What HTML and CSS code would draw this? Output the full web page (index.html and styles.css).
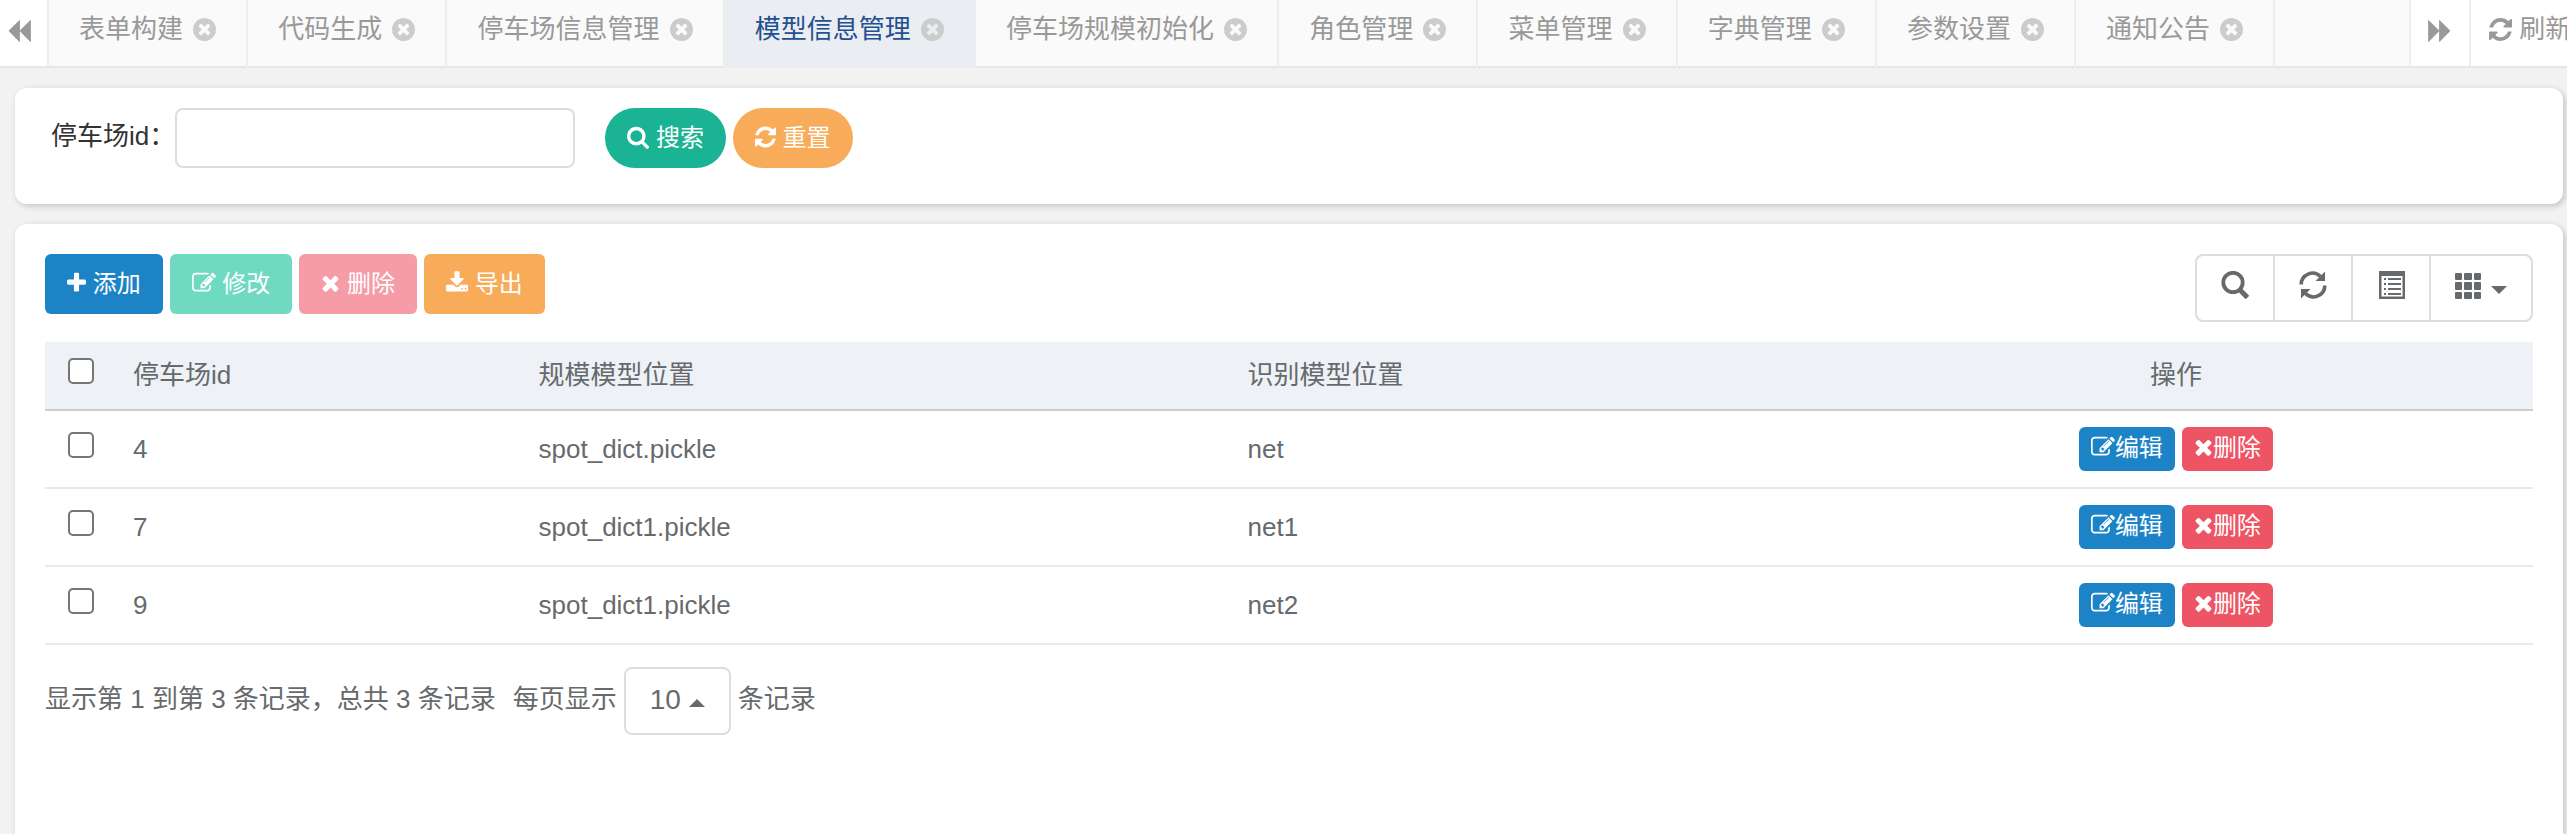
FILE: index.html
```html
<!DOCTYPE html>
<html lang="zh-CN">
<head>
<meta charset="utf-8">
<title>模型信息管理</title>
<link rel="stylesheet" href="styles.css">
</head>
<body>
<svg class="sprite" aria-hidden="true">
  <symbol id="i-close" viewBox="128 128 1536 1536"><path d="M1277 1122q0-26-19-45l-181-181 181-181q19-19 19-45 0-27-19-46l-90-90q-19-19-46-19-26 0-45 19l-181 181-181-181q-19-19-45-19-27 0-46 19l-90 90q-19 19-19 46 0 26 19 45l181 181-181 181q-19 19-19 45 0 27 19 46l90 90q19 19 46 19 26 0 45-19l181-181 181 181q19 19 45 19 27 0 46-19l90-90q19-19 19-46zm387-226q0 209-103 385.5t-279.5 279.5-385.5 103-385.5-103-279.5-279.5-103-385.5 103-385.5 279.5-279.5 385.5-103 385.5 103 279.5 279.5 103 385.5z"/></symbol>
  <symbol id="i-back" viewBox="64 128 1664 1540"><path d="M1683 141q19-19 32-13t13 32v1472q0 26-13 32t-32-13l-710-710q-9-9-13-19v710q0 26-13 32t-32-13l-710-710q-19-19-19-45t19-45l710-710q19-19 32-13t13 32v710q4-10 13-19z"/></symbol>
  <symbol id="i-search" viewBox="64 0 1664 1792"><path d="M1216 832q0-185-131.5-316.5t-316.5-131.5-316.5 131.5-131.5 316.5 131.5 316.5 316.5 131.5 316.5-131.5 131.5-316.5zm512 832q0 52-38 90t-90 38q-54 0-90-38l-343-342q-179 124-399 124-143 0-273.5-55.5t-225-150-150-225-55.5-273.5 55.5-273.5 150-225 225-150 273.5-55.5 273.5 55.5 225 150 150 225 55.5 273.5q0 220-124 399l343 343q37 37 37 90z"/></symbol>
  <symbol id="i-refresh" viewBox="128 128 1536 1536"><path d="M1639 1056q0 5-1 7-64 268-268 434.5t-478 166.5q-146 0-282.5-55t-243.5-157l-129 129q-19 19-45 19t-45-19-19-45v-448q0-26 19-45t45-19h448q26 0 45 19t19 45-19 45l-137 137q71 66 161 102t187 36q134 0 250-65t186-179q11-17 53-117 8-23 30-23h192q13 0 22.5 9.5t9.5 22.5zm25-800v448q0 26-19 45t-45 19h-448q-26 0-45-19t-19-45 19-45l138-138q-148-137-349-137-134 0-250 65t-186 179q-11 17-53 117-8 23-30 23h-199q-13 0-22.5-9.5t-9.5-22.5v-7q65-268 270-434.5t480-166.5q146 0 284 55.5t245 156.5l130-129q19-19 45-19t45 19 19 45z"/></symbol>
  <symbol id="i-plus" viewBox="192 0 1408 1792"><path d="M1600 736v192q0 40-28 68t-68 28h-416v416q0 40-28 68t-68 28h-192q-40 0-68-28t-28-68v-416h-416q-40 0-68-28t-28-68v-192q0-40 28-68t68-28h416v-416q0-40 28-68t68-28h192q40 0 68 28t28 68v416h416q40 0 68 28t28 68z"/></symbol>
  <symbol id="i-times" viewBox="192 0 1408 1792"><path d="M1490 1322q0 40-28 68l-136 136q-28 28-68 28t-68-28l-294-294-294 294q-28 28-68 28t-68-28l-136-136q-28-28-28-68t28-68l294-294-294-294q-28-28-28-68t28-68l136-136q28-28 68-28t68 28l294 294 294-294q28-28 68-28t68 28l136 136q28 28 28 68t-28 68l-294 294 294 294q28 28 28 68z"/></symbol>
  <symbol id="i-edit" viewBox="0 0 1792 1792"><path d="M888 1184l116-116-152-152-116 116v56h96v96h56zm440-720q-16-16-33 1l-350 350q-17 17-1 33t33-1l350-350q17-17 1-33zm80 594v190q0 119-84.5 203.5t-203.5 84.5h-832q-119 0-203.5-84.5t-84.5-203.5v-832q0-119 84.5-203.5t203.5-84.5h832q63 0 117 25 15 7 18 23 3 17-9 29l-49 49q-14 14-32 8-23-6-45-6h-832q-66 0-113 47t-47 113v832q0 66 47 113t113 47h832q66 0 113-47t47-113v-126q0-13 9-22l64-64q15-15 35-7t20 29zm-96-738l288 288-672 672h-288v-288zm444 132l-92 92-288-288 92-92q28-28 68-28t68 28l152 152q28 28 28 68t-28 68z"/></symbol>
  <symbol id="i-download" viewBox="64 0 1664 1792"><path d="M1344 1344q0-26-19-45t-45-19-45 19-19 45 19 45 45 19 45-19 19-45zm256 0q0-26-19-45t-45-19-45 19-19 45 19 45 45 19 45-19 19-45zm128-224v320q0 40-28 68t-68 28h-1472q-40 0-68-28t-28-68v-320q0-40 28-68t68-28h465l135 136q58 56 136 56t136-56l136-136h464q40 0 68 28t28 68zm-325-569q17 41-14 70l-448 448q-18 19-45 19t-45-19l-448-448q-31-29-14-70 17-39 59-39h256v-448q0-26 19-45t45-19h256q26 0 45 19t19 45v448h256q42 0 59 39z"/></symbol>
  <symbol id="i-gsearch" viewBox="0 0 28 28"><circle cx="12" cy="11.500" r="9.700" fill="none" stroke="currentColor" stroke-width="3.800"/><path d="M18.500 18.500l8 8" stroke="currentColor" stroke-width="5"/></symbol>
  <symbol id="i-grefresh" viewBox="0 0 28 28"><path d="M2.200 13.500A11.300 11.300 0 0 1 21.500 5.500M25.800 14.500A11.300 11.300 0 0 1 6.500 22.500" fill="none" stroke="currentColor" stroke-width="3.600"/><path d="M26 .500v9.500h-9.500zM2 27.500v-9.500h9.500z"/></symbol>
  <symbol id="i-list" viewBox="0 0 28 28"><path fill-rule="evenodd" d="M2 0h26v28H2zM4.500 5v20.500h21V5z"/><path d="M7 7h2v2H7zM11 7h13v2H11zM7 12h2v2H7zM11 12h13v2H11zM7 17h2v2H7zM11 17h13v2H11zM7 22h2v2H7zM11 22h13v2H11z"/></symbol>
  <symbol id="i-grid" viewBox="0 0 28 28"><g><rect x="0" y="2" width="7" height="7" rx="1"/><rect x="9" y="2" width="8" height="7" rx="1"/><rect x="19" y="2" width="7" height="7" rx="1"/><rect x="0" y="11" width="7" height="8" rx="1"/><rect x="9" y="11" width="8" height="8" rx="1"/><rect x="19" y="11" width="7" height="8" rx="1"/><rect x="0" y="21" width="7" height="7" rx="1"/><rect x="9" y="21" width="8" height="7" rx="1"/><rect x="19" y="21" width="7" height="7" rx="1"/></g></symbol>
</svg>

<nav class="tabbar">
  <button class="roll" type="button" aria-label="向左"><svg class="ic-roll"><use href="#i-back"/></svg></button>
  <div class="tabs">
    <a class="tab" href="#">表单构建 <svg class="ic-close"><use href="#i-close"/></svg></a>
    <a class="tab" href="#">代码生成 <svg class="ic-close"><use href="#i-close"/></svg></a>
    <a class="tab" href="#">停车场信息管理 <svg class="ic-close"><use href="#i-close"/></svg></a>
    <a class="tab active" href="#">模型信息管理 <svg class="ic-close"><use href="#i-close"/></svg></a>
    <a class="tab" href="#">停车场规模初始化 <svg class="ic-close"><use href="#i-close"/></svg></a>
    <a class="tab" href="#">角色管理 <svg class="ic-close"><use href="#i-close"/></svg></a>
    <a class="tab" href="#">菜单管理 <svg class="ic-close"><use href="#i-close"/></svg></a>
    <a class="tab" href="#">字典管理 <svg class="ic-close"><use href="#i-close"/></svg></a>
    <a class="tab" href="#">参数设置 <svg class="ic-close"><use href="#i-close"/></svg></a>
    <a class="tab" href="#">通知公告 <svg class="ic-close"><use href="#i-close"/></svg></a>
  </div>
  <button class="roll forward" type="button" aria-label="向右"><svg class="ic-roll"><use href="#i-back"/></svg></button>
  <a class="reload" href="#"><svg class="ic-close"><use href="#i-refresh"/></svg> 刷新</a>
</nav>

<main class="content">
  <form class="panel search">
    <label for="park">停车场id：</label>
    <input class="field" id="park" type="text">
    <div class="actions">
      <button class="btn round teal" type="button"><svg class="ic w22"><use href="#i-search"/></svg> 搜索</button>
      <button class="btn round orange" type="button"><svg class="ic w21"><use href="#i-refresh"/></svg> 重置</button>
    </div>
  </form>

  <section class="panel list">
    <div class="toolbar">
      <div class="group">
        <button class="btn blue" type="button"><svg class="ic w19"><use href="#i-plus"/></svg> 添加</button>
        <button class="btn green" type="button" disabled><svg class="ic w24"><use href="#i-edit"/></svg> 修改</button>
        <button class="btn pink" type="button" disabled><svg class="ic w19"><use href="#i-times"/></svg> 删除</button>
        <button class="btn orange" type="button"><svg class="ic w22"><use href="#i-download"/></svg> 导出</button>
      </div>
      <div class="tools">
        <button type="button" aria-label="搜索"><svg class="ic28"><use href="#i-gsearch"/></svg></button>
        <button type="button" aria-label="刷新"><svg class="ic28"><use href="#i-grefresh"/></svg></button>
        <button type="button" aria-label="切换"><svg class="ic28"><use href="#i-list"/></svg></button>
        <button type="button" aria-label="列"><svg class="ic28"><use href="#i-grid"/></svg><span class="caret"></span></button>
      </div>
    </div>

    <table class="grid">
      <colgroup><col class="c-check"><col class="c-id"><col class="c-size"><col class="c-model"><col></colgroup>
      <thead>
        <tr><th><input type="checkbox" aria-label="全选"></th><th>停车场id</th><th>规模模型位置</th><th>识别模型位置</th><th class="ops">操作</th></tr>
      </thead>
      <tbody>
        <tr><td><input type="checkbox" aria-label="选择 4"></td><td>4</td><td>spot_dict.pickle</td><td>net</td><td><div class="row-ops"><a class="btn small blue" href="#"><svg class="ic w24"><use href="#i-edit"/></svg>编辑</a><a class="btn small red" href="#"><svg class="ic w19"><use href="#i-times"/></svg>删除</a></div></td></tr>
        <tr><td><input type="checkbox" aria-label="选择 7"></td><td>7</td><td>spot_dict1.pickle</td><td>net1</td><td><div class="row-ops"><a class="btn small blue" href="#"><svg class="ic w24"><use href="#i-edit"/></svg>编辑</a><a class="btn small red" href="#"><svg class="ic w19"><use href="#i-times"/></svg>删除</a></div></td></tr>
        <tr><td><input type="checkbox" aria-label="选择 9"></td><td>9</td><td>spot_dict1.pickle</td><td>net2</td><td><div class="row-ops"><a class="btn small blue" href="#"><svg class="ic w24"><use href="#i-edit"/></svg>编辑</a><a class="btn small red" href="#"><svg class="ic w19"><use href="#i-times"/></svg>删除</a></div></td></tr>
      </tbody>
    </table>

    <div class="pager">
      <span class="total">显示第 1 到第 3 条记录，总共 3 条记录</span>
      <label for="size">每页显示</label>
      <span class="size"><select id="size"><option>10</option><option>25</option><option>50</option></select><span class="caret up"></span></span>
      <span class="unit">条记录</span>
    </div>
  </section>
</main>
</body>
</html>
```
FILE: styles.css
```css
* { box-sizing: border-box; }

body {
  margin: 0;
  height: 100vh;
  overflow: hidden;
  display: flex;
  flex-direction: column;
  background: #f2f2f2;
  color: #676a6c;
  font: 26px/36px "Liberation Sans", "Noto Sans CJK SC", sans-serif;
}

button, input, select { font: inherit; color: inherit; margin: 0; }
a { color: inherit; text-decoration: none; }
svg { fill: currentColor; flex: none; }
.sprite { position: absolute; width: 0; height: 0; }

/* Tab bar */
.tabbar {
  display: flex;
  flex: none;
  height: 68px;
  background: #fafafa;
  color: #999;
  line-height: 58px;
  white-space: nowrap;
  box-shadow: inset 0 -2px #e6e6e6;
}
.roll {
  width: 49px;
  height: 66px;
  padding: 0 0 4px;
  display: flex;
  align-items: center;
  justify-content: center;
  background: #fff;
  border: 0 solid #eee;
  border-right-width: 2px;
}
.roll:first-child { padding-right: 10px; }
.roll.forward { width: 62px; border-left-width: 2px; }
.roll.forward svg { transform: scaleX(-1); }
.ic-roll { width: 24px; height: 22px; }
.tabs { display: flex; flex: 1; min-width: 0; overflow: hidden; }
.tab { flex: none; padding: 0 30px; border-right: 2px solid #eee; }
.tab.active { background: #eaedf1; color: #23508e; border-color: #eaedf1; }
.ic-close { width: 23px; height: 23px; margin-left: 3px; vertical-align: -3px; }
.tab .ic-close { color: #ccc; }
.reload { width: 96px; height: 66px; padding-left: 15px; background: #fff; overflow: hidden; }

/* Panels */
.content {
  flex: 1;
  min-height: 0;
  display: flex;
  flex-direction: column;
  gap: 20px;
  padding: 20px 4px 0 15px;
}
.panel {
  background: #fff;
  border-radius: 12px;
  box-shadow: 2px 2px 6px rgba(0, 0, 0, .2);
}
.search {
  display: flex;
  align-items: flex-start;
  padding: 20px 36px 36px;
  color: #333;
}
.search label { line-height: 56px; }
.field {
  width: 400px;
  height: 60px;
  padding: 0 16px;
  border: 2px solid #ddd;
  border-radius: 8px;
  background: #fff;
}
.actions { display: flex; gap: 7px; margin-left: 30px; }
.list { flex: 1; padding: 30px 30px 0; border-radius: 12px 12px 0 0; }

/* Buttons */
.btn {
  height: 60px;
  padding: 0 22px;
  border: 0;
  border-radius: 6px;
  color: #fff;
  font-size: 24px;
  line-height: 60px;
  white-space: nowrap;
}
.btn.round { border-radius: 30px; }
.btn.small { height: 44px; line-height: 42px; padding: 0 12px; }
.teal { background: #1ab394; }
.orange { background: #f8ac59; }
.blue { background: #1c84c6; }
.green { background: #6fd9c2; }
.pink { background: #f59ca7; }
.red { background: #ed5565; }
.ic { height: 24px; vertical-align: -3px; }
.w19 { width: 19px; }
.w21 { width: 21px; }
.w22 { width: 22px; }
.w24 { width: 24px; }

/* Toolbar */
.toolbar { display: flex; justify-content: space-between; align-items: flex-start; }
.group { display: flex; gap: 7px; }
.tools {
  display: flex;
  border: 2px solid #ddd;
  border-radius: 8px;
}
.tools button {
  display: flex;
  align-items: center;
  gap: 8px;
  height: 64px;
  padding: 0 24px 6px;
  border: 0;
  background: none;
}
.tools button + button { border-left: 2px solid #ddd; }
.ic28 { width: 28px; height: 28px; }
.caret {
  width: 0;
  height: 0;
  margin-top: 10px;
  border: 8px solid transparent;
  border-top-color: currentColor;
  border-bottom: 0;
}
.caret.up {
  border: 8px solid transparent;
  border-bottom-color: currentColor;
  border-top: 0;
}

/* Table */
.grid {
  width: 100%;
  margin-top: 20px;
  table-layout: fixed;
  border-collapse: separate;
  border-spacing: 0;
}
.c-check { width: 72px; }
.c-id { width: 16.3%; }
.c-size { width: 28.5%; }
.c-model { width: 23.6%; }
.grid th {
  height: 69px;
  padding: 0 16px 2px;
  background: #eef1f6;
  border-bottom: 2px solid #ccc;
  font-weight: 400;
  text-align: left;
}
.grid td { height: 78px; padding: 0 16px; border-bottom: 2px solid #e7eaec; }
.grid .ops { text-align: center; }
.grid input {
  display: block;
  appearance: none;
  width: 26px;
  height: 26px;
  margin: 0 0 8px 7px;
  border: 2px solid #767676;
  border-radius: 5px;
  background: #fff;
}
.row-ops { display: flex; justify-content: center; gap: 7px; }

/* Pager */
.pager { display: flex; align-items: center; gap: 7px; padding-top: 22px; }
.pager label, .total, .unit { padding-bottom: 4px; }
.total { margin-right: 10px; }
.size { position: relative; }
.size select {
  display: block;
  appearance: none;
  width: 107px;
  height: 68px;
  padding: 0 24px 2px;
  border: 2px solid #ddd;
  border-radius: 8px;
  background: #fff;
  font-size: 28px;
}
.size .caret { position: absolute; right: 26px; top: 22px; pointer-events: none; }
```
